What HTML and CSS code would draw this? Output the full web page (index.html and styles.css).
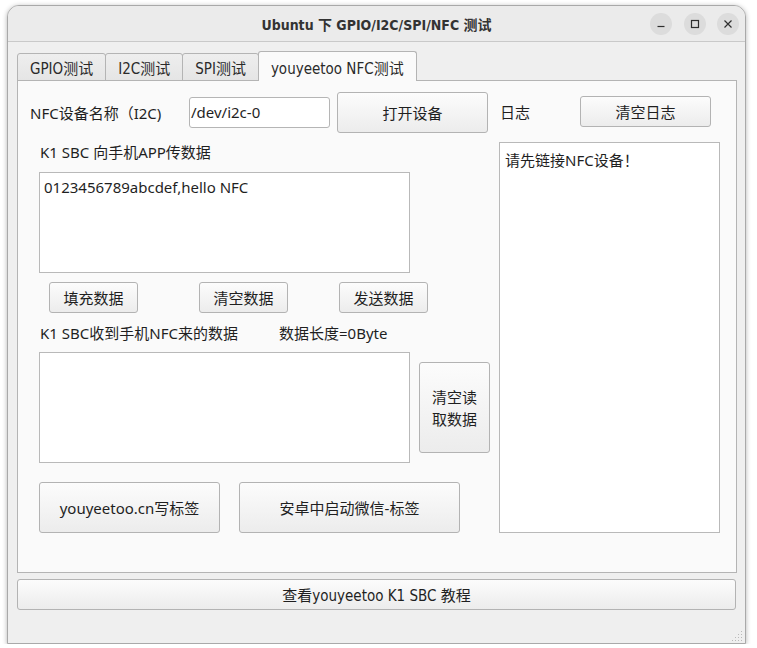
FILE: index.html
```html
<!DOCTYPE html>
<html lang="zh-CN">
<head>
    <meta charset="UTF-8">
    <title>Ubuntu 下 GPIO/I2C/SPI/NFC 测试</title>
    <link rel="stylesheet" href="styles.css">
</head>
<body>
    <div class="window">
        <div class="titlebar">
            <div></div>
            <div class="title">Ubuntu 下 GPIO/I2C/SPI/NFC 测试</div>
            <div class="controls">
                <span class="ctl">
                    <svg width="10" height="10" viewBox="0 0 10 10"><path d="M1.5 7.5h7" stroke="#2e2e2e" stroke-width="1.2"/></svg>
                </span>
                <span class="ctl">
                    <svg width="10" height="10" viewBox="0 0 10 10"><rect x="1.5" y="1.5" width="7" height="7" fill="none" stroke="#2e2e2e" stroke-width="1.2"/></svg>
                </span>
                <span class="ctl">
                    <svg width="10" height="10" viewBox="0 0 10 10"><path d="M1.5 1.5l7 7M8.5 1.5l-7 7" stroke="#2e2e2e" stroke-width="1.2"/></svg>
                </span>
            </div>
        </div>

        <div class="content">
            <div class="tabs">
                <div class="tab">GPIO测试</div>
                <div class="tab">I2C测试</div>
                <div class="tab">SPI测试</div>
                <div class="tab selected">youyeetoo NFC测试</div>
            </div>

            <div class="pane">
                <div class="left">
                    <div class="row dev-row">
                        <span class="dev-label">NFC设备名称（I2C)</span>
                        <div class="input">/dev/i2c-0</div>
                        <button class="btn open-btn">打开设备</button>
                    </div>
                    <div class="label send-label">K1 SBC 向手机APP传数据</div>
                    <div class="box send-box">0123456789abcdef,hello NFC</div>
                    <div class="row data-btns">
                        <button class="btn small-btn">填充数据</button>
                        <button class="btn small-btn">清空数据</button>
                        <button class="btn small-btn">发送数据</button>
                    </div>
                    <div class="row recv-labels">
                        <span class="recv-label">K1 SBC收到手机NFC来的数据</span>
                        <span>数据长度=0Byte</span>
                    </div>
                    <div class="row recv-row">
                        <div class="box recv-box"></div>
                        <button class="btn clear-read">清空读<br>取数据</button>
                    </div>
                    <div class="row tag-btns">
                        <button class="btn tag-btn">youyeetoo.cn写标签</button>
                        <button class="btn wechat-btn">安卓中启动微信-标签</button>
                    </div>
                </div>
                <div class="right">
                    <div class="row log-row">
                        <span class="log-label">日志</span>
                        <button class="btn log-btn">清空日志</button>
                    </div>
                    <div class="box log-box">请先链接NFC设备！</div>
                </div>
            </div>

            <button class="btn guide-btn">查看youyeetoo K1 SBC 教程</button>
        </div>

        <svg class="grip" width="11" height="11" viewBox="0 0 11 11">
            <g fill="#b9b9b9">
                <rect x="9" y="1" width="1" height="1"/>
                <rect x="6" y="4" width="1" height="1"/><rect x="9" y="4" width="1" height="1"/>
                <rect x="3" y="7" width="1" height="1"/><rect x="6" y="7" width="1" height="1"/><rect x="9" y="7" width="1" height="1"/>
                <rect x="0" y="10" width="1" height="1"/><rect x="3" y="10" width="1" height="1"/><rect x="6" y="10" width="1" height="1"/><rect x="9" y="10" width="1" height="1"/>
            </g>
        </svg>
    </div>
</body>
</html>
```

FILE: styles.css
```css
body {
    margin: 0;
    background: #fff;
    font-family: "Noto Sans", "Noto Sans CJK SC", sans-serif;
    font-size: 15px;
    color: #1f1f1f;
}
.window {
    position: relative;
    box-sizing: border-box;
    width: 739px;
    height: 639px;
    margin: 5px 0 0 7px;
    border: 1px solid #a9a9a9;
    border-radius: 12px 12px 0 0;
    background: #efefef;
    box-shadow: 0 1px 5px rgba(0,0,0,0.3);
}
.titlebar {
    display: grid;
    grid-template-columns: 1fr auto 1fr;
    align-items: center;
    height: 35px;
    border-bottom: 1px solid #c9c9c9;
    border-radius: 11px 11px 0 0;
    background: #ebebeb;
}
.title {
    font-family: "DejaVu Sans Condensed", "Noto Sans CJK SC", sans-serif;
    font-weight: bold;
    font-size: 14px;
    color: #333;
}
.controls {
    display: flex;
    justify-content: flex-end;
    gap: 11.5px;
    padding-right: 6px;
}
.ctl {
    width: 22px;
    height: 22px;
    border-radius: 50%;
    background: #dcdcdc;
    display: flex;
    align-items: center;
    justify-content: center;
}
.content {
    padding: 9px 8px 0 9px;
}
.tabs {
    display: flex;
    align-items: flex-end;
    height: 30px;
    margin-bottom: -1px;
    position: relative;
    z-index: 1;
    font-family: "DejaVu Sans Condensed", "Noto Sans CJK SC", sans-serif;
    font-size: 15px;
    color: #2a2a2a;
}
.tab {
    box-sizing: border-box;
    height: 28px;
    padding: 0 12px;
    margin-right: -1px;
    display: flex;
    align-items: center;
    border: 1px solid #b4b4b4;
    border-radius: 3px 3px 0 0;
    background: linear-gradient(#eeeeee, #e5e5e5);
}
.tab.selected {
    height: 30px;
    border-bottom: none;
    background: #fafafa;
    padding-top: 1px;
}
.pane {
    box-sizing: border-box;
    height: 493px;
    border: 1px solid #b4b4b4;
    background: #fafafa;
    display: flex;
}
.row {
    display: flex;
    align-items: center;
}
.btn {
    box-sizing: border-box;
    border: 1px solid #b3b3b3;
    border-radius: 3px;
    background: linear-gradient(#fcfcfc, #ececec);
    font: inherit;
    color: #1f1f1f;
    padding: 0;
}
.box {
    box-sizing: border-box;
    border: 1px solid #b9b9b9;
    background: #fff;
    line-height: 20px;
}
.left {
    width: 481px;
}
.dev-row {
    margin-top: 11px;
    height: 41px;
}
.dev-label {
    width: 159px;
    padding-left: 12px;
}
.input {
    box-sizing: border-box;
    width: 141px;
    height: 31px;
    padding-left: 1px;
    line-height: 29px;
    border: 1px solid #b5b5b5;
    border-radius: 3px;
    background: #fff;
}
.open-btn {
    width: 151px;
    height: 41px;
    margin-left: 7px;
}
.label {
    padding-left: 22px;
}
.send-label {
    height: 39px;
    line-height: 39px;
}
.send-box {
    width: 371px;
    height: 101px;
    margin-left: 21px;
    padding: 4px 4px;
}
.data-btns {
    margin-top: 9px;
    padding-left: 31px;
}
.small-btn {
    width: 89px;
    height: 31px;
}
.small-btn + .small-btn {
    margin-left: 61px;
}
.small-btn:last-child {
    margin-left: 51px;
}
.recv-labels {
    height: 39px;
    padding-left: 22px;
}
.recv-label {
    width: 239px;
}
.recv-row {
    align-items: flex-start;
}
.recv-box {
    width: 371px;
    height: 111px;
    margin-left: 21px;
}
.clear-read {
    width: 71px;
    height: 91px;
    margin: 10px 0 0 9px;
    line-height: 22px;
}
.tag-btns {
    margin-top: 19px;
    padding-left: 21px;
    gap: 19px;
}
.tag-btn {
    width: 181px;
    height: 51px;
}
.wechat-btn {
    width: 221px;
    height: 51px;
}
.right {
    width: 221px;
}
.log-row {
    margin-top: 15px;
    height: 31px;
}
.log-label {
    width: 80px;
    padding-left: 1px;
}
.log-btn {
    width: 131px;
    height: 31px;
}
.log-box {
    height: 391px;
    margin-top: 15px;
    padding: 7px 5px;
}
.guide-btn {
    display: block;
    width: 719px;
    height: 31px;
    margin-top: 6px;
    font-family: "DejaVu Sans Condensed", "Noto Sans CJK SC", sans-serif;
    font-size: 15px;
}
.grip {
    position: absolute;
    right: 2px;
    bottom: 2px;
}
```
